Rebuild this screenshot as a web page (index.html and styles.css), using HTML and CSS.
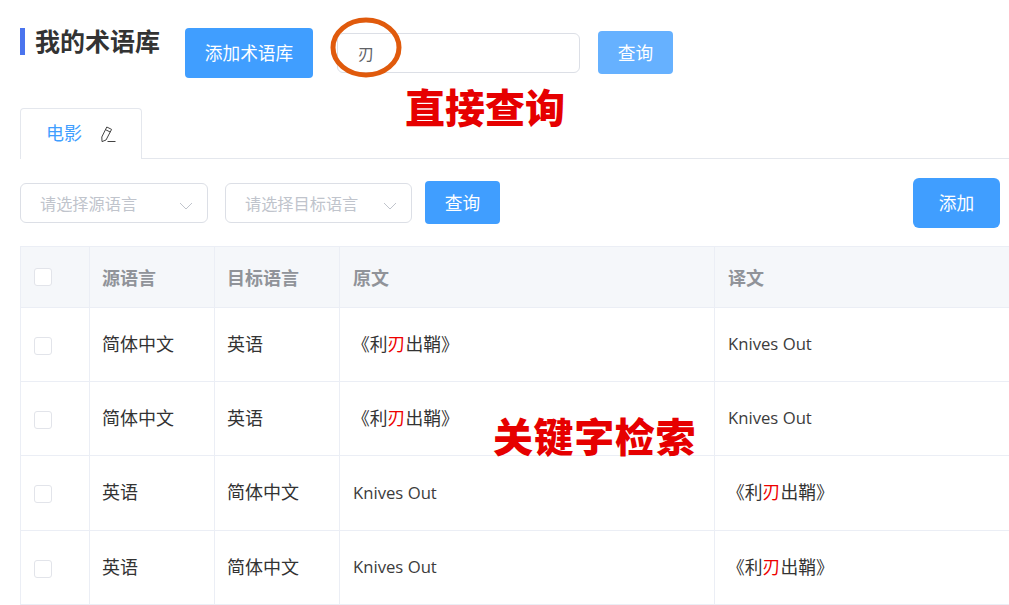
FILE: index.html
```html
<!DOCTYPE html>
<html lang="zh-CN">
<head>
<meta charset="utf-8">
<title>我的术语库</title>
<link rel="stylesheet" href="styles.css">
</head>
<body>
<div class="page">
  <header class="top">
    <h1 class="title">我的术语库</h1>
    <button class="btn btn-add-lib">添加术语库</button>
    <div class="search-input">刃</div>
    <button class="btn btn-search-top">查询</button>
  </header>
  <nav class="tabs">
    <div class="tab">
      <span class="tab-name">电影</span>
      <svg class="pencil" width="18" height="18" viewBox="0 0 18 18" fill="none" stroke="#444" stroke-width="1"><path d="M6.8 2 L11.6 4.4 L6 15 L2 16.6 L1.8 12 Z"/><path d="M5.4 4.6 L10.2 7"/><path d="M7.5 16.5 H15.5"/></svg>
    </div>
  </nav>
  <div class="filters">
    <div class="select select-src"><span>请选择源语言</span><svg class="chev" width="14" height="8" viewBox="0 0 14 8" fill="none" stroke="#c0c4cc" stroke-width="1"><path d="M1 1 L7 7 L13 1"/></svg></div>
    <div class="select select-tgt"><span>请选择目标语言</span><svg class="chev" width="14" height="8" viewBox="0 0 14 8" fill="none" stroke="#c0c4cc" stroke-width="1"><path d="M1 1 L7 7 L13 1"/></svg></div>
    <button class="btn btn-query">查询</button>
    <button class="btn btn-add">添加</button>
  </div>
  <table class="grid">
    <colgroup><col class="c1"><col class="c2"><col class="c3"><col class="c4"><col class="c5"></colgroup>
    <thead>
      <tr><th><i class="check"></i></th><th>源语言</th><th>目标语言</th><th class="wide">原文</th><th class="wide">译文</th></tr>
    </thead>
    <tbody>
      <tr><td><i class="check"></i></td><td>简体中文</td><td>英语</td><td class="title-cell">《利<em>刃</em>出鞘》</td><td class="en">Knives Out</td></tr>
      <tr><td><i class="check"></i></td><td>简体中文</td><td>英语</td><td class="title-cell">《利<em>刃</em>出鞘》</td><td class="en">Knives Out</td></tr>
      <tr class="tall"><td><i class="check"></i></td><td>英语</td><td>简体中文</td><td class="en">Knives Out</td><td class="title-cell">《利<em>刃</em>出鞘》</td></tr>
      <tr><td><i class="check"></i></td><td>英语</td><td>简体中文</td><td class="en">Knives Out</td><td class="title-cell">《利<em>刃</em>出鞘》</td></tr>
    </tbody>
  </table>
  <svg class="ring" width="76" height="66" viewBox="0 0 76 66" fill="none"><ellipse cx="36" cy="30.5" rx="33" ry="27.5" stroke="#e05a0c" stroke-width="5"/></svg>
  <div class="note note-direct">直接查询</div>
  <div class="note note-keyword">关键字检索</div>
</div>
</body>
</html>
```
FILE: styles.css
```css
* { box-sizing: border-box; }
html, body { margin: 0; padding: 0; background: #fff; }
body { font-family: "Open Sans", "Noto Sans CJK SC", sans-serif; color: #333; overflow: hidden; }
.page { position: relative; width: 1009px; height: 605px; overflow: hidden; padding: 27px 0 0 20px; }
.top { display: flex; align-items: flex-start; height: 81px; }
.title { margin: 1px 0 0; height: 27px; border-left: 5px solid #4a74ee; padding-left: 10px; font-size: 25px; line-height: 27px; font-weight: 700; color: #333; width: 165px; white-space: nowrap; }
.btn { border: 0; border-radius: 4px; background: #409eff; color: #fff; font-family: inherit; font-size: 17.7px; line-height: 24px; padding: 0; display: block; }
.btn-add-lib { width: 128px; height: 50px; margin: 1px 0 0; }
.search-input { width: 243px; height: 40px; margin: 6px 0 0 24px; border: 1px solid #dcdfe6; border-radius: 6px; padding-left: 20px; font-size: 16px; line-height: 40px; color: #606266; }
.btn-search-top { width: 75px; height: 43px; margin: 4px 0 0 18px; background: #66b1ff; }
.tabs { height: 51px; border-bottom: 1px solid #e4e7ed; }
.tab { width: 122px; height: 51px; border: 1px solid #e4e7ed; border-bottom: 0; border-radius: 4px 4px 0 0; background: #fff; display: flex; align-items: center; padding-left: 25px; }
.tab-name { font-size: 18px; color: #409eff; line-height: 24px; width: 54px; margin-bottom: 2px; }
.pencil { margin-bottom: 1px; }
.filters { display: flex; align-items: flex-start; height: 87px; padding-top: 19px; }
.select { height: 40px; margin-top: 5px; border: 1px solid #dcdfe6; border-radius: 6px; display: flex; align-items: center; justify-content: space-between; padding: 0 14px 0 19px; font-size: 16.2px; color: #c0c4cc; }
.select-src { width: 188px; }
.select-tgt { width: 187px; margin-left: 17px; }
.chev { margin-top: 6px; }
.btn-query { width: 75px; height: 43px; margin: 3px 0 0 13px; }
.btn-add { width: 87px; height: 50px; margin-left: 413px; border-radius: 6px; }
.grid { width: 1100px; table-layout: fixed; border-collapse: collapse; font-size: 18px; }
.c1 { width: 69px; } .c2 { width: 125px; } .c3 { width: 125px; } .c4 { width: 375px; } .c5 { width: 406px; }
.grid th, .grid td { border: 1px solid #ebeef5; padding: 0 12px 4px; text-align: left; vertical-align: middle; }
.grid th { height: 61px; background: #f5f7fa; color: #909399; font-weight: 700; padding-bottom: 0; }
.grid th.wide { padding-left: 13px; }
.grid td { height: 74px; color: #333; font-size: 18px; }
.grid .tall td { height: 75px; }
.grid td.en { font-size: 16.7px; padding-left: 13px; padding-bottom: 2px; font-weight: 400; color: #3c3c3c; }
.grid td.title-cell { font-size: 17.8px; }
.grid em { font-style: normal; color: #e00; }
.check { display: block; width: 18px; height: 18px; margin: 6px 0 0 1px; border: 1px solid #e2e4ea; border-radius: 3px; background: #fff; }
.grid th .check { margin-top: 0; }
.ring { position: absolute; left: 330px; top: 17px; }
.note { position: absolute; color: #e60000; font-weight: 900; font-size: 40px; line-height: 44px; white-space: nowrap; }
.note-direct { left: 405px; top: 86px; }
.note-keyword { left: 493px; top: 415px; letter-spacing: 0.6px; }
```
